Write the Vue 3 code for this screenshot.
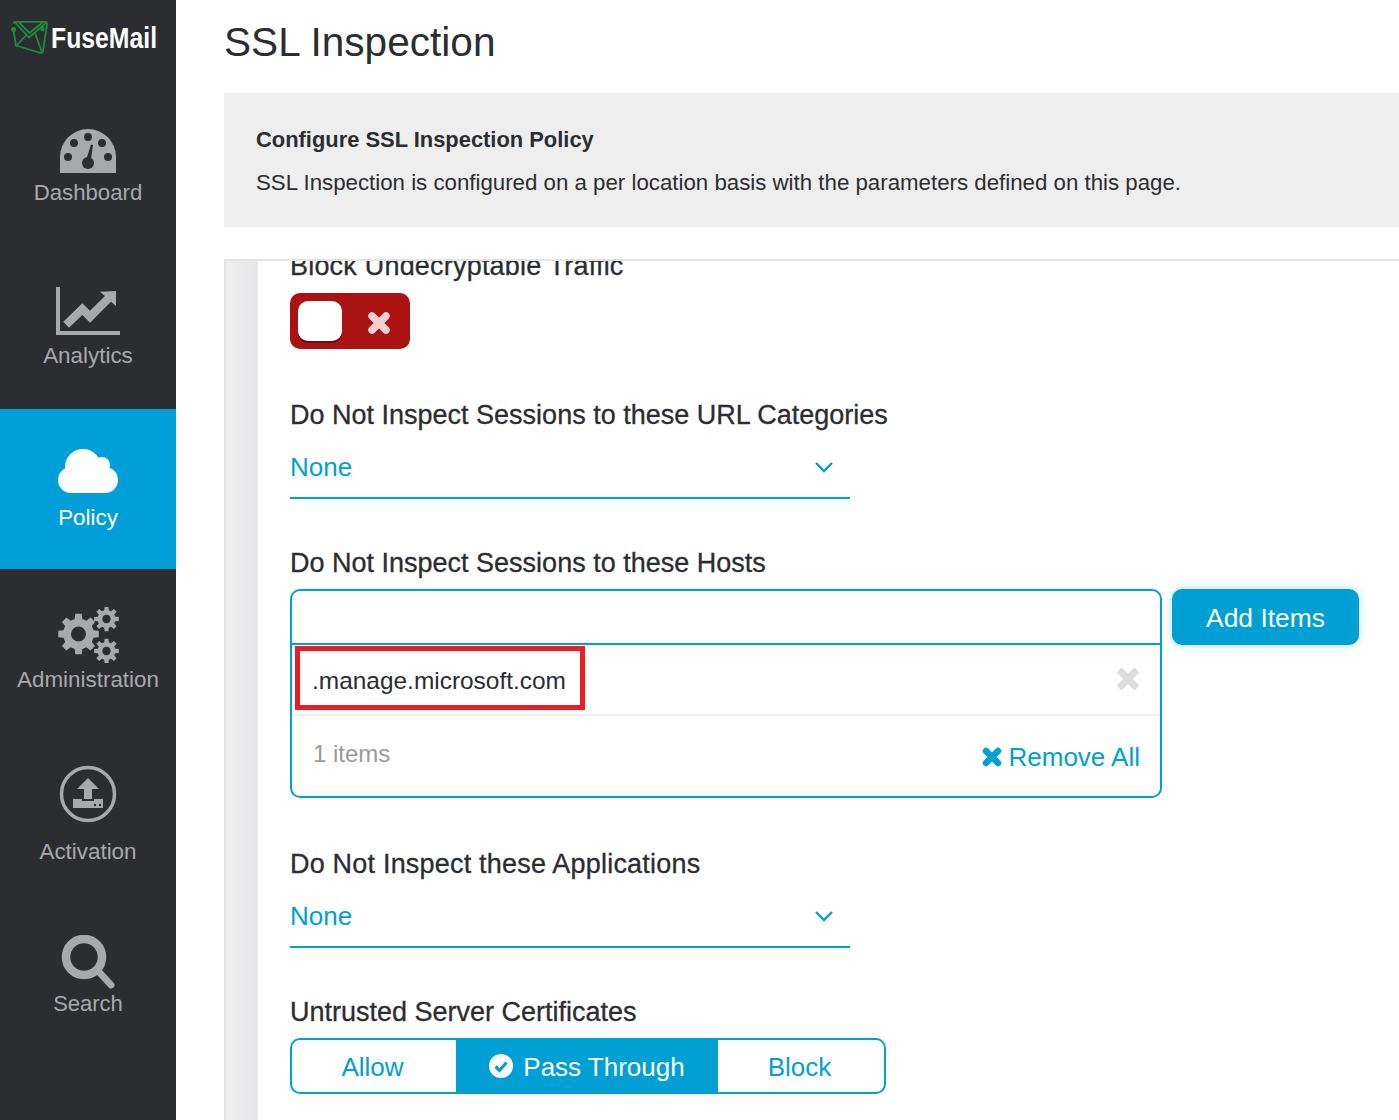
<script setup>
function gear(cx, cy, ro, ri, hole, teeth) {
  const pts = []
  const step = (Math.PI * 2) / teeth
  for (let i = 0; i < teeth; i++) {
    const a = i * step - Math.PI / 2
    const w = step * 0.2
    const list = [
      [ri, a - step * 0.32],
      [ro, a - w],
      [ro, a + w],
      [ri, a + step * 0.32]
    ]
    for (const [r, t] of list) pts.push((cx + r * Math.cos(t)).toFixed(2) + ' ' + (cy + r * Math.sin(t)).toFixed(2))
  }
  return 'M' + pts.join('L') + 'Z' +
    `M${cx - hole} ${cy}a${hole} ${hole} 0 1 0 ${hole * 2} 0a${hole} ${hole} 0 1 0 ${-hole * 2} 0Z`
}
const gears = [gear(20.5, 27, 20.5, 15.5, 7.5, 8), gear(48.5, 12, 12.5, 9, 4.2, 8), gear(48.5, 44, 12.5, 9, 4.2, 8)]
</script>

<template>
  <div class="app">
    <aside class="sidebar">
      <div class="logo">
        <svg class="logo-mark" width="38" height="36" viewBox="0 0 38 36" fill="none" stroke="#1f8a3f" stroke-width="1.8" stroke-linejoin="round" stroke-linecap="round">
          <path d="M3 3 Q3 1.8 5 1.8 L34 1.8 Q36.5 2 36 4.5 L32 31 Q31.5 33.5 29 32.8 L5 25.5" />
          <path d="M4 2.5 L18 17.5 L35 3" />
          <path d="M8 2.5 L18.5 13 L31 3" />
          <path d="M2.5 10 L5 26 L15 15.5 M24 13 L31 32.5" />
          <circle cx="2.5" cy="9.5" r="1.7" fill="#1f8a3f" />
          <circle cx="31.5" cy="9" r="1.3" fill="#1f8a3f" />
        </svg>
        <span class="logo-text">FuseMail</span>
      </div>

      <a class="nav dash">
        <svg class="ico" width="56" height="44" viewBox="0 0 56 44">
          <path d="M0 44 V28 A28 28 0 0 1 56 28 V44 Z" fill="#a7a9ac" />
          <g fill="#2b2d31">
            <circle cx="8" cy="28" r="4" /><circle cx="14" cy="14" r="4" /><circle cx="28" cy="8" r="4" />
            <circle cx="42" cy="14" r="4" /><circle cx="48" cy="28" r="4" /><circle cx="28" cy="34" r="6" />
            <path d="M25.5 33 L31 15.5 L33 16 L30.5 34 Z" />
          </g>
        </svg>
        <span>Dashboard</span>
      </a>

      <a class="nav ana">
        <svg class="ico" width="65" height="48" viewBox="0 0 65 48" fill="#a7a9ac">
          <path d="M0 0 H4 V44 H64 V48 H0 Z" />
          <path d="M7.3 34.7 L26.3 16.3 L34 23.7 L49 9 L44 4.7 L60 4 L60 19 L55 14.7 L34 35.7 L26.3 28 L13 40.7 Z" />
        </svg>
        <span>Analytics</span>
      </a>

      <a class="nav policy active">
        <svg class="ico" width="60" height="44" viewBox="0 0 60 44" fill="#fff">
          <circle cx="25" cy="18" r="18" /><circle cx="44" cy="16" r="8" />
          <circle cx="13" cy="31" r="13" /><circle cx="47" cy="31" r="13" />
          <rect x="13" y="22" width="34" height="22" />
        </svg>
        <span>Policy</span>
      </a>

      <a class="nav admin">
        <svg class="ico" width="61" height="56" viewBox="0 0 61 56" fill="#a7a9ac" fill-rule="evenodd">
          <path v-for="(d, i) in gears" :key="i" :d="d" />
        </svg>
        <span>Administration</span>
      </a>

      <a class="nav activ">
        <svg class="ico" width="58" height="58" viewBox="0 0 58 58">
          <circle cx="29" cy="29" r="26.5" fill="none" stroke="#a7a9ac" stroke-width="3.5" />
          <path d="M29 13 L40 24 H33 V34 H25 V24 H18 Z" fill="#a7a9ac" />
          <path d="M14 34 H23 V36 H35 V34 H44 V43 H14 Z" fill="#a7a9ac" />
          <circle cx="36" cy="40" r="1.2" fill="#2b2d31" /><circle cx="41" cy="40" r="1.2" fill="#2b2d31" />
        </svg>
        <span>Activation</span>
      </a>

      <a class="nav search">
        <svg class="ico" width="54" height="54" viewBox="0 0 54 54">
          <circle cx="23" cy="22" r="18" fill="none" stroke="#a7a9ac" stroke-width="8.5" />
          <path d="M39 38 L50 50" stroke="#a7a9ac" stroke-width="7" stroke-linecap="round" />
        </svg>
        <span>Search</span>
      </a>
    </aside>

    <main class="main">
      <h1 class="title">SSL Inspection</h1>

      <section class="info">
        <h2>Configure SSL Inspection Policy</h2>
        <p>SSL Inspection is configured on a per location basis with the parameters defined on this page.</p>
      </section>

      <section class="panel">
        <div class="strip"></div>
        <div class="form">
          <div class="form-inner">
            <div class="field tall">
              <label class="spaced">Block Undecryptable Traffic</label>
              <div class="toggle">
                <span class="knob"></span>
                <svg class="toggle-x" width="24" height="24" viewBox="0 0 24 24"><path d="M5 5 L19 19 M19 5 L5 19" stroke="#efd0d0" stroke-width="7.5" stroke-linecap="round" /></svg>
              </div>
            </div>

            <div class="field">
              <label>Do Not Inspect Sessions to these URL Categories</label>
              <div class="select">
                <span>None</span>
                <svg width="20" height="12" viewBox="0 0 20 12"><path d="M2 2 L10 10 L18 2" fill="none" stroke="#009fd4" stroke-width="2.4" /></svg>
              </div>
            </div>

            <div class="field tall">
              <label>Do Not Inspect Sessions to these Hosts</label>
              <div class="hosts-row">
                <div class="hosts">
                  <div class="hosts-input"></div>
                  <div class="host-item">
                    <span class="host-name">.manage.microsoft.com</span>
                    <svg class="host-x" width="24" height="24" viewBox="0 0 24 24"><path d="M3 3 L21 21 M21 3 L3 21" stroke="#dcdcdc" stroke-width="7" /></svg>
                    <div class="callout"></div>
                  </div>
                  <div class="hosts-foot">
                    <span class="count">1 items</span>
                    <a class="remove">
                      <svg width="20" height="20" viewBox="0 0 20 20"><path d="M4 4 L16 16 M16 4 L4 16" stroke="#009fd4" stroke-width="6.5" stroke-linecap="round" /></svg>
                      Remove All
                    </a>
                  </div>
                </div>
                <button class="add">Add Items</button>
              </div>
            </div>

            <div class="field">
              <label class="spaced">Do Not Inspect these Applications</label>
              <div class="select">
                <span>None</span>
                <svg width="20" height="12" viewBox="0 0 20 12"><path d="M2 2 L10 10 L18 2" fill="none" stroke="#009fd4" stroke-width="2.4" /></svg>
              </div>
            </div>

            <div class="field">
              <label>Untrusted Server Certificates</label>
              <div class="segment">
                <div class="seg allow">Allow</div>
                <div class="seg pass">
                  <svg width="24" height="24" viewBox="0 0 24 24"><circle cx="12" cy="12" r="12" fill="#fff" /><path d="M6.5 12.5 L10.5 16.5 L17.5 8.5" fill="none" stroke="#009fd4" stroke-width="3.2" /></svg>
                  Pass Through
                </div>
                <div class="seg block">Block</div>
              </div>
            </div>
          </div>
        </div>
      </section>
    </main>
  </div>
</template>

<style>
html, body { margin: 0; overflow: hidden; background: #fff; }
</style>

<style scoped>
.app {
  display: flex;
  width: 1399px;
  height: 1120px;
  overflow: hidden;
  font-family: "Liberation Sans", Arial, sans-serif;
  color: #2b2d31;
  background: #fff;
}
.sidebar {
  flex: 0 0 176px;
  width: 176px;
  min-width: 0;
  background: #2b2d31;
  color: #a7a9ac;
  display: flex;
  flex-direction: column;
}
.logo {
  height: 85px;
  flex: none;
  width: 176px;
  display: flex;
  align-items: flex-start;
  padding: 20px 0 0 11px;
  box-sizing: border-box;
}
.logo-text {
  font-size: 29.5px;
  line-height: 36px;
  font-weight: 700;
  color: #fff;
  margin-left: 2px;
  width: 108px;
  transform: scaleX(0.84);
  transform-origin: left center;
  white-space: nowrap;
}
.nav {
  display: flex;
  flex-direction: column;
  align-items: center;
  font-size: 22.4px;
  line-height: 26px;
  box-sizing: border-box;
  flex: none;
}
.ico { display: block; flex: none; }
.dash { height: 162px; padding-top: 44px; font-size: 22.2px; }
.dash .ico { margin-bottom: 7px; }
.ana { height: 162px; padding-top: 40px; }
.ana .ico { margin-bottom: 8px; }
.policy { height: 160px; padding-top: 40px; }
.policy .ico { margin-bottom: 12px; }
.active { background: #009fd9; color: #fff; }
.admin { height: 172px; padding-top: 38px; }
.admin .ico { margin-bottom: 4px; }
.activ { height: 162px; padding-top: 24px; }
.activ .ico { margin-bottom: 16px; }
.search { padding-top: 32px; font-size: 22px; }
.search .ico { margin-bottom: 2px; }

.main {
  flex: 1;
  min-width: 0;
  padding-left: 48px;
  display: flex;
  flex-direction: column;
}
.title {
  margin: 0;
  height: 93px;
  flex: none;
  font-size: 40.6px;
  line-height: 84px;
  font-weight: 400;
}
.info {
  flex: none;
  height: 134px;
  box-sizing: border-box;
  background: #eee;
  padding: 31px 32px 0;
  margin-bottom: 32px;
}
.info h2 {
  margin: 0;
  font-size: 21.9px;
  line-height: 32px;
  font-weight: 700;
}
.info p {
  margin: 11px 0 0;
  font-size: 22.28px;
  line-height: 32px;
}
.panel {
  flex: 1;
  min-height: 0;
  display: flex;
  border-top: 2px solid #e4e4e4;
  border-left: 2px solid #e4e4e4;
}
.strip {
  flex: 0 0 32px;
  background: linear-gradient(to right, #efeff0, #e6e6e8);
}
.form {
  flex: 1;
  min-width: 0;
  overflow: hidden;
}
.form-inner {
  margin-top: -14px;
  padding-left: 32px;
}
.field { margin-bottom: 45px; }
.field.tall { margin-bottom: 47px; }
label {
  display: block;
  font-size: 27px;
  line-height: 36px;
  padding-top: 1px;
  margin-bottom: 8px;
  -webkit-text-stroke: 0.3px #2b2d31;
}
label.spaced { letter-spacing: 0.2px; }
.toggle {
  width: 120px;
  height: 56px;
  margin-top: 9px;
  box-sizing: border-box;
  border-radius: 10px;
  background: #ab1212;
  display: flex;
  align-items: center;
  padding: 0 19px 0 8px;
  justify-content: space-between;
}
.toggle-x { margin-top: 3px; }
.knob {
  width: 44px;
  height: 40px;
  border-radius: 10px;
  background: #fff;
  box-shadow: 0 2px 0 #6e0b0b;
}
.select {
  width: 560px;
  height: 58px;
  box-sizing: border-box;
  border-bottom: 2px solid #009fd4;
  padding: 0 16px 4px 0;
  display: flex;
  align-items: center;
  justify-content: space-between;
  color: #009fd4;
  font-size: 26px;
}
.hosts-row {
  display: flex;
  align-items: flex-start;
  gap: 10px;
}
.hosts {
  width: 872px;
  height: 209px;
  box-sizing: border-box;
  border: 2px solid #009fd4;
  border-radius: 10px;
  display: flex;
  flex-direction: column;
}
.hosts-input {
  flex: none;
  height: 54px;
  box-sizing: border-box;
  border-bottom: 2px solid #009fd4;
}
.host-item {
  position: relative;
  flex: none;
  height: 71px;
  box-sizing: border-box;
  border-bottom: 2px solid #eee;
  display: flex;
  align-items: center;
  justify-content: space-between;
  padding: 0 20px 0 20px;
  font-size: 24.45px;
}
.host-name { margin-top: 2px; }
.host-x { margin-top: -2px; }
.callout {
  position: absolute;
  left: 3px;
  top: 1px;
  width: 290px;
  height: 64px;
  box-sizing: border-box;
  border: 5px solid #ed1c24;
}
.hosts-foot {
  flex: 1;
  display: flex;
  justify-content: space-between;
  align-items: center;
  padding: 0 20px;
}
.count { font-size: 24px; color: #9a9a9a; margin-top: -4px; margin-left: 1px; }
.remove {
  display: flex;
  align-items: center;
  gap: 7px;
  color: #009fd4;
  font-size: 26px;
  margin-top: 2px;
}
.add {
  width: 187px;
  height: 56px;
  border: 0;
  border-radius: 10px;
  background: #009fd4;
  color: #fff;
  font-family: inherit;
  font-size: 26.4px;
  padding: 2px 0 0;
  box-shadow: 0 0 10px rgba(0, 159, 212, 0.3);
}
.segment {
  width: 596px;
  height: 56px;
  box-sizing: border-box;
  border: 2px solid #009fd4;
  border-radius: 10px;
  display: flex;
  color: #009fd4;
  font-size: 26px;
}
.seg {
  display: flex;
  align-items: center;
  justify-content: center;
  gap: 10px;
  padding-top: 2px;
  box-sizing: border-box;
}
.allow { width: 164px; padding-right: 3px; }
.pass {
  width: 262px;
  margin: -2px 0;
  background: #009fd4;
  color: #fff;
}
.pass svg { margin-top: -3px; }
.block { flex: 1; padding-right: 3px; }
</style>
